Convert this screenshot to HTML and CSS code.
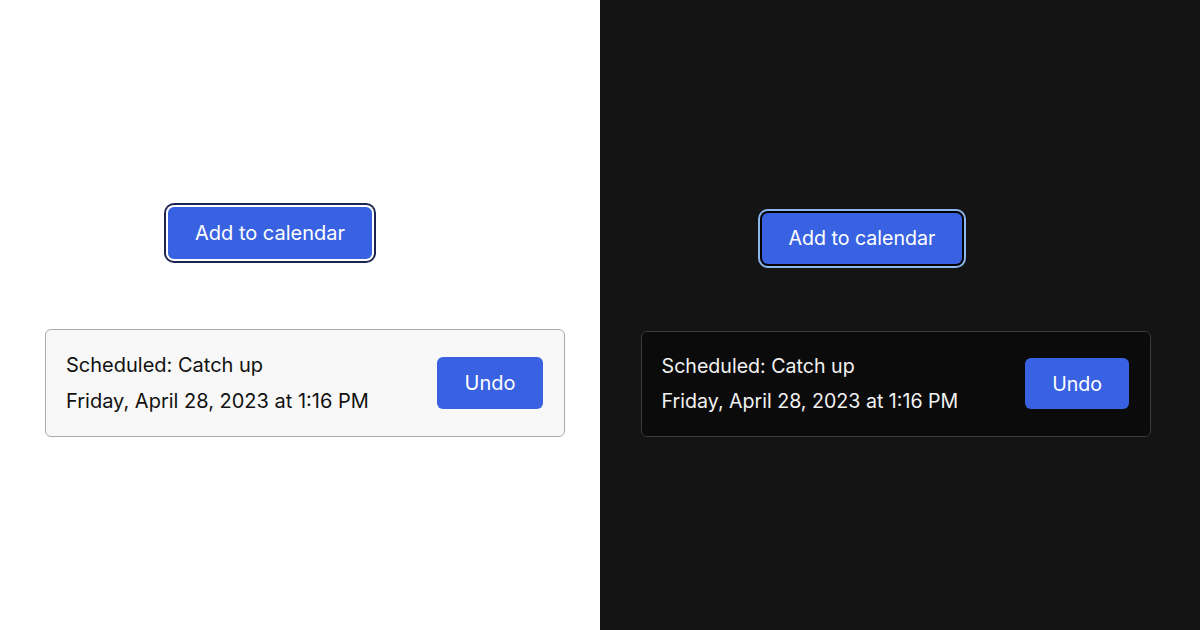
FILE: index.html
```html
<!DOCTYPE html>
<html lang="en">
<head>
<meta charset="utf-8">
<title>Add to calendar</title>
<link rel="stylesheet" href="styles.css">
</head>
<body>
<main class="split">
  <section class="panel panel-light">
    <button class="cal-btn" type="button">Add to calendar</button>
    <div class="toast">
      <div class="toast-text">
        <p class="toast-line">Scheduled: Catch up</p>
        <p class="toast-line">Friday, April 28, 2023 at 1:16 PM</p>
      </div>
      <button class="undo-btn" type="button">Undo</button>
    </div>
  </section>
  <section class="panel panel-dark">
    <button class="cal-btn" type="button">Add to calendar</button>
    <div class="toast">
      <div class="toast-text">
        <p class="toast-line">Scheduled: Catch up</p>
        <p class="toast-line">Friday, April 28, 2023 at 1:16 PM</p>
      </div>
      <button class="undo-btn" type="button">Undo</button>
    </div>
  </section>
</main>
</body>
</html>
```
FILE: styles.css
```css
* { box-sizing: border-box; }
html, body { margin: 0; padding: 0; }
body {
  width: 1200px;
  height: 630px;
  overflow: hidden;
  font-family: Inter, "Noto Sans", "Liberation Sans", sans-serif;
}
.split {
  display: flex;
  width: 1200px;
  height: 630px;
}
.panel {
  width: 600px;
  height: 630px;
  display: flex;
  flex-direction: column;
  align-items: flex-start;
  font-size: 20px;
}
.panel-light {
  background: #ffffff;
  color: #111111;
  padding: 207px 0 0 45px;
  --ring-inner: #ffffff;
  --ring-outer: #1b2452;
  --toast-bg: #f8f8f8;
  --toast-border: #ababab;
  gap: 70px;
}
.panel-dark {
  background: #141414;
  color: #f2f2f2;
  padding: 213px 0 0 41px;
  font-size: 19.6px;
  --ring-inner: #000000;
  --ring-outer: #8cb6ee;
  --toast-bg: #0b0b0b;
  --toast-border: #3a3a3a;
  gap: 67px;
}
.panel-light .cal-btn { margin-left: 123px; }
.panel-dark .cal-btn { margin-left: 121px; }

.cal-btn {
  width: 10.2em;
  height: 2.6em;
  border: none;
  border-radius: 0.3em;
  background: #3862e1;
  color: #ffffff;
  font-family: inherit;
  font-size: 1em;
  padding: 0;
  box-shadow: 0 0 0 2px var(--ring-inner), 0 0 0 4px var(--ring-outer);
}
.toast {
  width: 26em;
  height: 5.4em;
  display: flex;
  align-items: center;
  justify-content: space-between;
  padding: 0 1.05em 0 1em;
  background: var(--toast-bg);
  border: 1px solid var(--toast-border);
  border-radius: 0.3em;
}
.toast-text {
  font-size: 1em;
}
.toast-line {
  margin: 0;
  line-height: 1.8em;
}
.undo-btn {
  width: 5.3em;
  height: 2.6em;
  border: none;
  border-radius: 0.3em;
  background: #3862e1;
  color: #ffffff;
  font-family: inherit;
  font-size: 1em;
  padding: 0;
}
```
